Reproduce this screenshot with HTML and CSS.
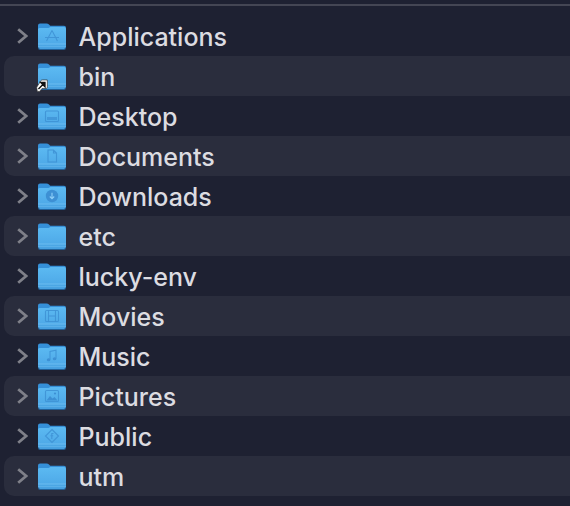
FILE: index.html
```html
<!DOCTYPE html>
<html lang="en">
<head>
  <meta charset="UTF-8" />
  <title>Finder list</title>
  <link rel="stylesheet" href="styles.css">
</head>
<body>
  <svg class="defs" width="0" height="0">
    <defs>
      <linearGradient id="front" x1="0" y1="0" x2="0" y2="1">
        <stop offset="0" stop-color="#5cbaf2"/>
        <stop offset="0.75" stop-color="#4faae8"/>
        <stop offset="1" stop-color="#459ede"/>
      </linearGradient>
      <symbol id="folder" viewBox="0 0 28 27">
        <path d="M0 2.5Q0 .5 2 .5H8.5Q10 .5 11 1.6L12.2 2.8H26Q28 2.8 28 5V10H0Z" fill="#3590d8"/>
        <path d="M0 6.5Q0 5 1.5 5H10.5L12.5 3.9H26Q28 3.9 28 6V24Q28 26 26 26H2Q0 26 0 24Z" fill="url(#front)"/>
        <rect x="0" y="20.5" width="28" height="1" fill="#84ccf5" opacity=".55"/>
        <rect x="0" y="23" width="28" height="1" fill="#84ccf5" opacity=".3"/>
        <path d="M0 24Q0 26 2 26H26Q28 26 28 24V25Q28 27 26 27H2Q0 27 0 25Z" fill="#215f97"/>
      </symbol>
      <symbol id="chevron" viewBox="0 0 11 16">
        <path d="M1.2 1.2 9.200 8 1.2 14.800" fill="none" stroke="#7f8089" stroke-width="2.800"/>
      </symbol>
    </defs>
  </svg>
  <div class="topline"></div>
  <ul class="list">
    <li class="row">
      <svg class="chevron"><use href="#chevron"/></svg>
      <svg class="folder" viewBox="0 0 28 27">
        <use href="#folder"/>
        <path class="mark" d="M14 7.500 9 17M14 7.500 19 17M7 14.500H21M8.500 18 9.500 16.500M19.500 18 18.500 16.500"/>
      </svg>
      <span class="name">Applications</span>
    </li>
    <li class="row">
      <span class="no-chevron"></span>
      <span class="icon-wrap">
        <svg class="folder" viewBox="0 0 28 27"><use href="#folder"/></svg>
        <svg class="alias" viewBox="0 0 10 11">
          <path d="M1 10.500 .5 7 4 1.500Q4.500 .8 5.500 .8H9.500V7Q9.500 8 8.500 8H5L3 10.500Z" fill="#fff" stroke="#333" stroke-width=".6"/>
          <path d="M2 8.500 6 4.500M4 3H7.500V6.500Z" fill="#111" stroke="#111" stroke-width="1.200"/>
        </svg>
      </span>
      <span class="name">bin</span>
    </li>
    <li class="row">
      <svg class="chevron"><use href="#chevron"/></svg>
      <svg class="folder" viewBox="0 0 28 27">
        <use href="#folder"/>
        <rect class="mark" x="7.500" y="8" width="13" height="10.500" rx="1"/>
        <rect class="mark-fill" x="9" y="14" width="10" height="3"/>
      </svg>
      <span class="name">Desktop</span>
    </li>
    <li class="row">
      <svg class="chevron"><use href="#chevron"/></svg>
      <svg class="folder" viewBox="0 0 28 27">
        <use href="#folder"/>
        <path class="mark" d="M10 7H15.500L18.500 10V19H10ZM15.500 7V10H18.500"/>
      </svg>
      <span class="name">Documents</span>
    </li>
    <li class="row">
      <svg class="chevron"><use href="#chevron"/></svg>
      <svg class="folder" viewBox="0 0 28 27">
        <use href="#folder"/>
        <circle class="mark-fill solid" cx="14" cy="13" r="6.200"/>
        <path class="mark light" d="M14 9.800V15.600M11.800 13.500 14 15.800 16.200 13.500"/>
      </svg>
      <span class="name">Downloads</span>
    </li>
    <li class="row">
      <svg class="chevron"><use href="#chevron"/></svg>
      <svg class="folder" viewBox="0 0 28 27"><use href="#folder"/></svg>
      <span class="name">etc</span>
    </li>
    <li class="row">
      <svg class="chevron"><use href="#chevron"/></svg>
      <svg class="folder" viewBox="0 0 28 27"><use href="#folder"/></svg>
      <span class="name">lucky-env</span>
    </li>
    <li class="row">
      <svg class="chevron"><use href="#chevron"/></svg>
      <svg class="folder" viewBox="0 0 28 27">
        <use href="#folder"/>
        <rect class="mark" x="7.500" y="7.500" width="13" height="11" rx="1"/>
        <path class="mark" d="M10.500 7.500V18.500M17.500 7.500V18.500M10.500 13H17.500"/>
      </svg>
      <span class="name">Movies</span>
    </li>
    <li class="row">
      <svg class="chevron"><use href="#chevron"/></svg>
      <svg class="folder" viewBox="0 0 28 27">
        <use href="#folder"/>
        <path class="mark" d="M12 16.500V8.500L18 7.200V15.500"/>
        <ellipse class="mark-fill solid" cx="10.600" cy="16.700" rx="1.800" ry="1.500"/>
        <ellipse class="mark-fill solid" cx="16.600" cy="15.700" rx="1.800" ry="1.500"/>
      </svg>
      <span class="name">Music</span>
    </li>
    <li class="row">
      <svg class="chevron"><use href="#chevron"/></svg>
      <svg class="folder" viewBox="0 0 28 27">
        <use href="#folder"/>
        <rect class="mark" x="7.500" y="7.500" width="13" height="11" rx="1"/>
        <path class="mark-fill solid" d="M8.500 17.500 12 13 14.500 15.500 16.500 14 19.500 17.500Z"/>
        <circle class="mark-fill solid" cx="17" cy="10.500" r="1.100"/>
      </svg>
      <span class="name">Pictures</span>
    </li>
    <li class="row">
      <svg class="chevron"><use href="#chevron"/></svg>
      <svg class="folder" viewBox="0 0 28 27">
        <use href="#folder"/>
        <path class="mark" d="M14 6.500 20.500 13 14 19.500 7.500 13Z"/>
        <path class="mark" d="M15.500 10.500H13.800V16M12.500 12.800H15.200"/>
      </svg>
      <span class="name">Public</span>
    </li>
    <li class="row">
      <svg class="chevron"><use href="#chevron"/></svg>
      <svg class="folder" viewBox="0 0 28 27"><use href="#folder"/></svg>
      <span class="name">utm</span>
    </li>
  </ul>
</body>
</html>
```

FILE: styles.css
```css
html, body {
  margin: 0;
  height: 100%;
  overflow: hidden;
}
body {
  background-color: #1e2132;
  font-family: Inter, "Liberation Sans", sans-serif;
  color: #dcdce1;
  padding-top: 4px;
  box-sizing: border-box;
}
.defs {
  display: block;
  height: 0;
}
.topline {
  height: 2px;
  background-color: #444654;
}
.list {
  list-style: none;
  margin: 10px 0 0 4px;
  padding: 0;
}
.row {
  display: flex;
  align-items: center;
  height: 40px;
  padding-left: 13px;
}
.row:nth-child(even) {
  background-color: #2a2d3d;
  border-radius: 10px 0 0 10px;
}
.chevron, .no-chevron {
  display: block;
  flex: none;
  width: 11px;
  height: 16px;
  margin-right: 10px;
  margin-top: -1px;
}
.icon-wrap {
  position: relative;
  display: block;
  width: 28px;
  height: 27px;
}
.folder {
  display: block;
  flex: none;
  width: 28px;
  height: 27px;
}
.alias {
  position: absolute;
  left: -2px;
  bottom: -2px;
  width: 12px;
  height: 13px;
}
.mark {
  fill: none;
  stroke: #3d90d4;
  stroke-width: 1.1;
  opacity: .85;
}
.mark.light {
  stroke: #8fd0f8;
  opacity: 1;
}
.mark-fill {
  fill: #3d90d4;
  opacity: .75;
}
.mark-fill.solid {
  opacity: 1;
}
.name {
  margin-left: 12.5px;
  margin-top: 2px;
  font-size: 25px;
  font-weight: 450;
  line-height: 40px;
  white-space: nowrap;
}
```
